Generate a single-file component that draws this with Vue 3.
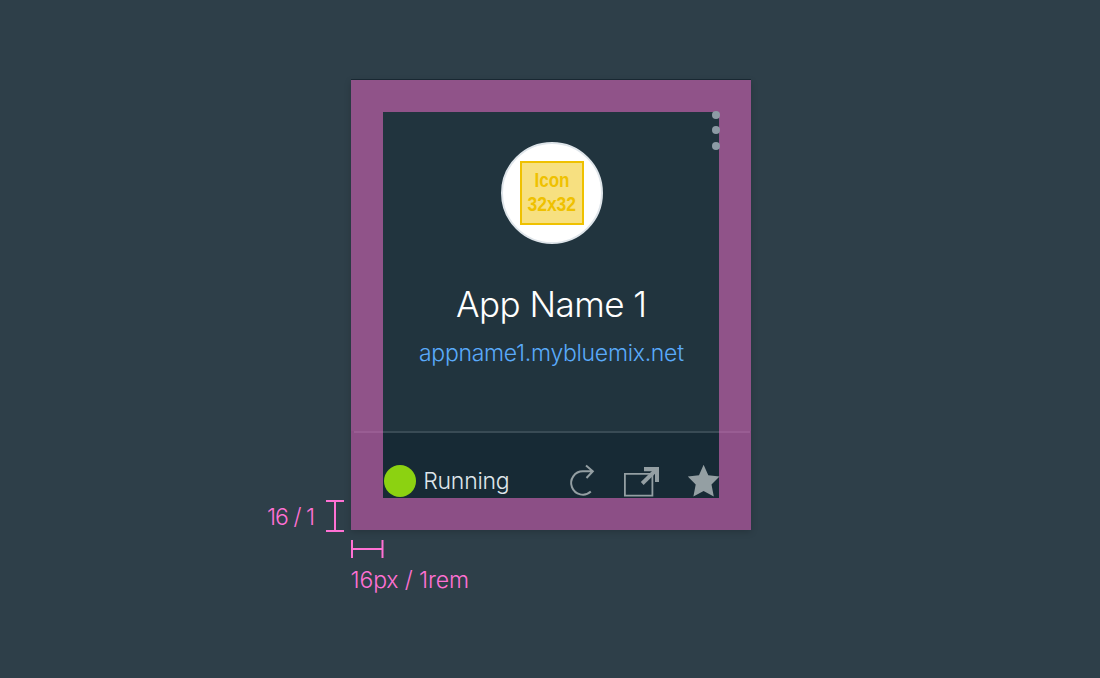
<script setup>
const dots = [0, 1, 2]
</script>

<template>
  <main class="canvas">
    <div class="side">
      <svg class="label" width="50" height="28" viewBox="0 0 50 28">
        <text x="0" y="22" textLength="48">16 / 1</text>
      </svg>
      <svg width="18" height="32" viewBox="0 0 18 32" class="measure">
        <path d="M0 1H18M0 31H18M9 1V31" />
      </svg>
    </div>

    <div class="column">
      <article class="card">
        <section class="body">
          <div class="menu"><i v-for="d in dots" :key="d"></i></div>
          <div class="avatar">
            <div class="icon-box">
              <svg width="60" height="60" viewBox="522 163 60 60">
                <text x="534.5" y="187" textLength="35" lengthAdjust="spacingAndGlyphs">Icon</text>
                <text x="527.5" y="211" textLength="48.5" lengthAdjust="spacingAndGlyphs">32x32</text>
              </svg>
            </div>
          </div>
          <svg class="title" width="336" height="50" viewBox="383 280 336 50">
            <text x="456" y="317" textLength="191">App Name 1</text>
          </svg>
          <svg class="link" width="336" height="36" viewBox="383 336 336 36">
            <text x="419" y="361" textLength="265">appname1.mybluemix.net</text>
          </svg>
        </section>

        <footer class="footer">
          <div class="content">
            <span class="status"></span>
            <svg class="state" width="96" height="34" viewBox="417 464 96 34">
              <text x="423.2" y="489" textLength="86.5">Running</text>
            </svg>
            <svg class="actions" width="155" height="34" viewBox="565 464 155 34">
              <path class="restart" d="M592.8 471.3H583A11.7 11.7 0 1 0 590.8 491.6M586 465.6L592.8 471.3L586.5 478" />
              <path class="frame" d="M624.9 473.9H652.4V495.6H624.9Z" />
              <path class="arrow" d="M642.2 483.5L656.5 469.5" />
              <path class="solid" d="M644 467H659V482H655V471.2H644Z" />
              <path class="solid" d="M703.6 464.7L708.3 475.2L719.5 476.6L711.5 484.5L713.8 496.6L703.6 491.1L693.4 496.6L695.7 484.5L687.8 476.6L699 475.2Z" />
            </svg>
          </div>
        </footer>
      </article>

      <svg class="measure bottom" width="33" height="18" viewBox="0 0 33 18">
        <path d="M1 0V18M31.5 0V18M1 9H31.5" />
      </svg>
      <svg class="label caption" width="130" height="34" viewBox="351 566 130 34">
        <text x="350.5" y="588" textLength="118.5">16px / 1rem</text>
      </svg>
    </div>
  </main>
</template>

<style>
body {
  background: #2e3f49;
}
</style>

<style scoped>
.canvas {
  display: flex;
  box-sizing: border-box;
  width: 1100px;
  height: 678px;
  padding: 80px 0 0 267px;
  overflow: hidden;
  background: #2e3f49;
  font-family: Inter, "Liberation Sans", sans-serif;
  font-weight: 350;
}

svg {
  display: block;
  flex: none;
}

.side {
  display: flex;
  gap: 8.5px;
  width: 84px;
  height: 452px;
  align-items: flex-end;
}

.side .label {
  margin-bottom: 1px;
}

.measure {
  fill: none;
  stroke: #ff71d4;
  stroke-width: 2;
}

.label {
  fill: #ff71d4;
  font-size: 23px;
}

.card {
  position: relative;
  display: flex;
  flex-direction: column;
  width: 400px;
  height: 450px;
  box-shadow: 0 -1px 0 #192832, 0 2px 7px rgba(0, 0, 0, 0.18);
}

.card::after {
  content: "";
  position: absolute;
  inset: 0;
  border: 32px solid rgba(218, 105, 189, 0.6);
}

.body {
  display: flex;
  flex-direction: column;
  align-items: center;
  box-sizing: border-box;
  height: 351px;
  padding-top: 62px;
  background: #21343e;
}

.menu {
  position: absolute;
  z-index: 1;
  top: 30.5px;
  right: 31.5px;
  display: flex;
  flex-direction: column;
  gap: 7.7px;
}

.menu i {
  width: 8px;
  height: 8px;
  border-radius: 50%;
  background: #8d9ba5;
}

.avatar {
  display: flex;
  flex: none;
  box-sizing: border-box;
  width: 102px;
  height: 102px;
  margin-left: 2px;
  padding: 17px;
  border: 2px solid #dfe5ea;
  border-radius: 50%;
  background: #fff;
}

.icon-box {
  box-sizing: border-box;
  width: 64px;
  height: 64px;
  border: 2px solid #efc100;
  background: #f7e080;
}

.icon-box text {
  fill: #efc100;
  font: bold 19.5px "Liberation Sans", sans-serif;
}

.title {
  margin-top: 36px;
  fill: #fff;
  font-size: 35px;
  font-weight: 300;
}

.link {
  margin-top: 6px;
  fill: #5aaafa;
  font-size: 23px;
}

.footer {
  flex: 1;
  background:
    linear-gradient(#394b55, #394b55) 3px 0 / 396px 2px no-repeat,
    #172a35;
}

.content {
  position: relative;
  z-index: 1;
  display: flex;
  align-items: center;
  padding: 33px 31px 0 33px;
}

.status {
  width: 32px;
  height: 32px;
  border-radius: 50%;
  background: #8cd211;
}

.state {
  margin-left: 1px;
  fill: #dfe6eb;
  font-size: 23px;
}

.actions {
  margin-left: auto;
  fill: none;
  stroke: #949fa3;
  stroke-width: 2;
}

.actions .frame {
  stroke-width: 1.8;
}

.actions .arrow {
  stroke-width: 4;
}

.actions .solid {
  fill: #949fa3;
  stroke: none;
}

.bottom {
  margin-top: 10px;
}

.caption {
  margin-top: 8px;
}
</style>
